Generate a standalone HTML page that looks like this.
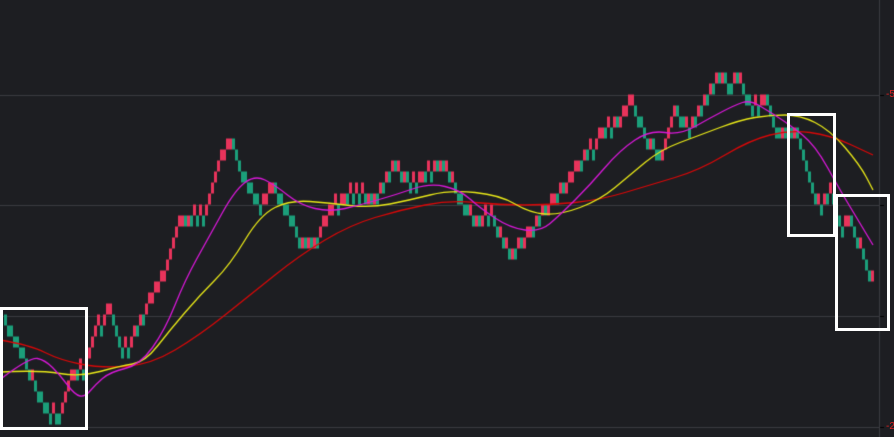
<!DOCTYPE html><html><head><style>html,body{margin:0;padding:0;background:#1d1e22;overflow:hidden}canvas{display:block}
.b{position:absolute;border:3px solid #fff;box-sizing:border-box}
.l{position:absolute;left:886px;color:#e02020;font:10px "Liberation Sans",sans-serif}</style></head><body>
<canvas id="c" width="894" height="437"></canvas>
<div class="b" style="left:0;top:307px;width:88px;height:123px"></div>
<div class="b" style="left:787px;top:113px;width:49px;height:124px"></div>
<div class="b" style="left:835px;top:194px;width:55px;height:137px"></div>
<div class="l" style="top:89px">-5</div>
<div class="l" style="top:421px">-2</div>
<script>
const c=document.getElementById('c').getContext('2d');
c.fillStyle='#1d1e22';c.fillRect(0,0,894,437);
c.fillStyle='#3a3b40';
[95,205,316,427].forEach(y=>c.fillRect(0,y,879,1));
c.fillRect(879,0,1,437);
c.fillStyle='#000';[95,205,316,427].forEach(y=>c.fillRect(880,y,4,1));
const wp=[[4,320],[20,350],[45,410],[58,420],[70,380],[85,365],[95,330],[110,310],[120,355],[135,335],[150,300],[165,270],[180,220],[205,215],[220,160],[230,140],[245,180],[260,210],[268,190],[275,190],[300,240],[315,245],[330,210],[355,190],[375,200],[395,165],[410,185],[430,170],[445,165],[460,200],[475,220],[490,215],[510,255],[525,240],[545,210],[565,185],[590,150],[605,130],[620,120],[632,100],[645,140],[660,155],[675,110],[690,130],[705,100],[720,75],[730,90],[740,75],[750,110],[765,100],[775,130],[795,130],[805,165],[820,210],[830,190],[840,230],[850,220],[877,295]];
function interp(x){for(let i=0;i<wp.length-1;i++){if(x<=wp[i+1][0]){const[a,b]=wp[i],[d,e]=wp[i+1];return b+(e-b)*(x-a)/(d-a);}}return wp[wp.length-1][1];}
let y=320,H=11;
for(let x=4;x<=873;x+=3){const t=interp(x);let up;
 if(t<y-3){y-=H;up=true;}else if(t>y+3){y+=H;up=false;}else{up=(x/3)%2<1;}
 c.fillStyle=up?'#e8335b':'#1b9f7a';c.fillRect(x,y-H/2,3,H);}
function line(pts,col){c.strokeStyle=col;c.lineWidth=1.3;c.beginPath();c.moveTo(pts[0][0],pts[0][1]);
 for(let i=1;i<pts.length-1;i++){const mx=(pts[i][0]+pts[i+1][0])/2,my=(pts[i][1]+pts[i+1][1])/2;c.quadraticCurveTo(pts[i][0],pts[i][1],mx,my);}
 const l=pts[pts.length-1];c.lineTo(l[0],l[1]);c.stroke();}
line([[0,340],[30,345],[60,360],[100,368],[150,365],[200,335],[250,295],[300,255],[350,225],[400,210],[450,200],[500,205],[550,205],[600,200],[650,185],[700,170],[750,140],[790,130],[830,135],[873,155]],'#d80808');
line([[0,372],[40,370],[80,377],[120,366],[145,362],[170,330],[200,295],[230,265],[260,215],[290,200],[330,203],[370,208],[410,200],[450,190],[500,195],[530,213],[560,215],[600,200],[630,175],[660,150],[700,135],[740,120],[770,115],[800,115],[830,130],[860,165],[873,190]],'#e8e818');
line([[2,378],[30,357],[45,360],[60,375],[75,395],[85,397],[95,385],[110,372],[140,365],[165,330],[185,280],[210,235],[235,190],[255,175],[275,185],[300,205],[330,212],[360,205],[395,195],[430,183],[460,190],[480,208],[510,228],[540,232],[560,215],[590,185],[620,150],[650,130],[680,135],[710,118],[735,105],[750,100],[770,112],[790,125],[815,145],[840,190],[855,215],[873,245]],'#d818d8');
</script></body></html>
